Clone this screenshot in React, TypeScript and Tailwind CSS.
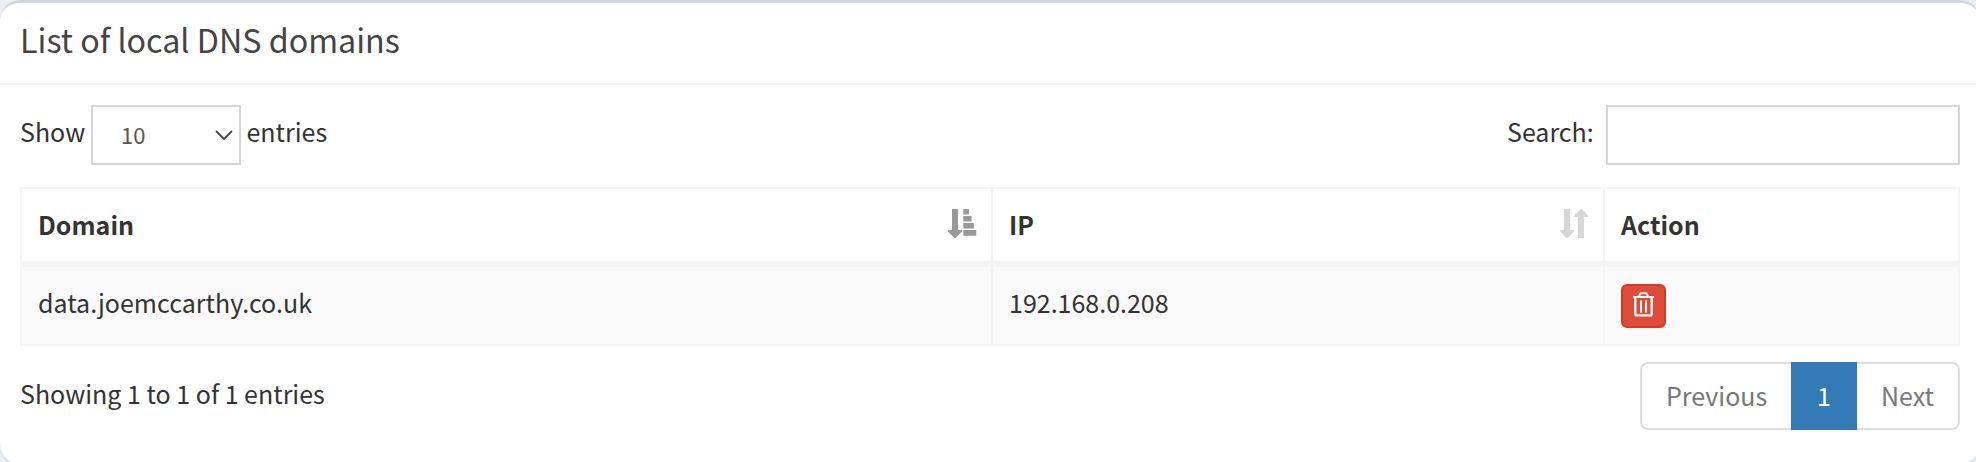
const sans = "font-['Noto_Sans_CJK_JP',sans-serif]";

function Trash() {
  return (
    <svg viewBox="0 0 21 25" className="-mt-[3px] h-[25px] w-[21px]" fill="none" stroke="#fff">
      <path d="M0 5h21" strokeWidth="2" />
      <path d="M5.800 5 6.800 2.500Q7.200 1.300 8.400 1.300h4.200q1.200 0 1.600 1.200l1 2.500" strokeWidth="1.900" />
      <path d="M2.300 5v17q0 1.400 1.400 1.400h13.600q1.400 0 1.400-1.400V5" strokeWidth="2.300" />
      <path d="M8 8.500v12M13 8.500v12" strokeWidth="2" />
    </svg>
  );
}

function SortedIcon() {
  return (
    <svg viewBox="0 0 30 30" className="mt-[5px] h-[30px] w-[30px]" fill="#999">
      <path d="M4 0h6v21h4v1.500L7.500 29h-1L0 22.500V21h4z" />
      <path d="M15.300 0h5.700v5.500h-5.700zM15.300 7h8.200v5.500h-8.200zM15.300 14h10.500v5.500h-10.500zM15.300 21h13v5.700h-13z" />
    </svg>
  );
}

function UnsortedIcon() {
  return (
    <svg viewBox="0 0 30 30" className="mt-[5px] h-[30px] w-[30px]" fill="#d6d6d6">
      <path d="M4 0h6v21h4v1.500L7.500 29h-1L.3 22.500V21H4z" />
      <path d="M18 29h6V8h4V6.500L21.500 0h-1L14.200 6.500V8H18z" />
    </svg>
  );
}

export default function App() {
  return (
    <div className={`h-[462px] w-[1976px] overflow-hidden bg-[#ecf0f5] text-[25px] leading-[40px] text-[#333] ${sans}`}>
      <section className="h-[464px] w-[1980px] rounded-[20px] border-t-[3px] border-[#d2d6de] bg-white shadow-[0_2px_2px_rgba(0,0,0,0.1)]">
        <header className="flex h-[82px] w-full items-center border-b-2 border-[#f4f4f4] pb-[9px] pl-5">
          <h3 className="text-[32.250px] text-[#444]">List of local DNS domains</h3>
        </header>
        <div className="w-[1960px] pl-5">
          <div className="flex h-[102px] justify-between pt-5">
            <label className="flex h-[60px]">
              <span className="w-[71px] pt-[6px]">Show</span>
              <span className="flex h-[60px] w-[150px] items-center justify-between border-2 border-[#d2d6de] pl-7 pr-[6px] text-[22px] text-[#555]">
                <span className="-mt-[3px]">10</span>
                <svg viewBox="0 0 18 10" className="h-[10px] w-[18px]" fill="none" stroke="#444" strokeWidth="1.800">
                  <path d="m1 1 8 8 8-8" />
                </svg>
              </span>
              <span className="pl-[5.500px] pt-[6px]">entries</span>
            </label>
            <label className="flex h-[60px]">
              <span className="w-[99px] pt-[6px]">Search:</span>
              <input className="h-[60px] w-[354px] border-2 border-[#d2d6de] bg-white px-5 outline-none" />
            </label>
          </div>
          <div className="grid h-[159px] grid-cols-[971px_612px_353px] grid-rows-[78px_77px] border-2 border-[#f4f4f4]">
            <div className="flex justify-between border-b-[6px] border-r-2 border-[#f4f4f4] pl-4 pr-[13px] pt-[15px] font-bold">
              Domain<SortedIcon />
            </div>
            <div className="flex justify-between border-b-[6px] border-r-2 border-[#f4f4f4] pl-4 pr-[13px] pt-[15px] font-bold">
              IP<UnsortedIcon />
            </div>
            <div className="border-b-[6px] border-[#f4f4f4] pl-4 pt-[15px] font-bold">Action</div>
            <div className="border-r-2 border-[#f4f4f4] bg-[#f9f9f9] pl-4 pt-[15px] tracking-[0.001em]">data.joemccarthy.co.uk</div>
            <div className="border-r-2 border-[#f4f4f4] bg-[#f9f9f9] pl-4 pt-[15px]">192.168.0.208</div>
            <div className="bg-[#f9f9f9] pl-4 pt-[17px]">
              <button className="flex h-[44px] w-[45px] items-center justify-center rounded-[6px] border-2 border-[#d73925] bg-[#dd4b39]">
                <Trash />
              </button>
            </div>
          </div>
          <div className="flex justify-between pt-4">
            <div className="pt-[11px]">Showing 1 to 1 of 1 entries</div>
            <nav className="flex h-[68px] text-[#777]">
              <span className="flex w-[151px] items-center rounded-l-[8px] border-2 border-r-0 border-[#ddd] pb-[2px] pl-[24px]">Previous</span>
              <span className="flex w-[66px] items-center justify-center bg-[#337ab7] pb-[2px] text-white">1</span>
              <span className="flex w-[103px] items-center rounded-r-[8px] border-2 border-l-0 border-[#ddd] pb-[2px] pl-6">Next</span>
            </nav>
          </div>
        </div>
      </section>
    </div>
  );
}
